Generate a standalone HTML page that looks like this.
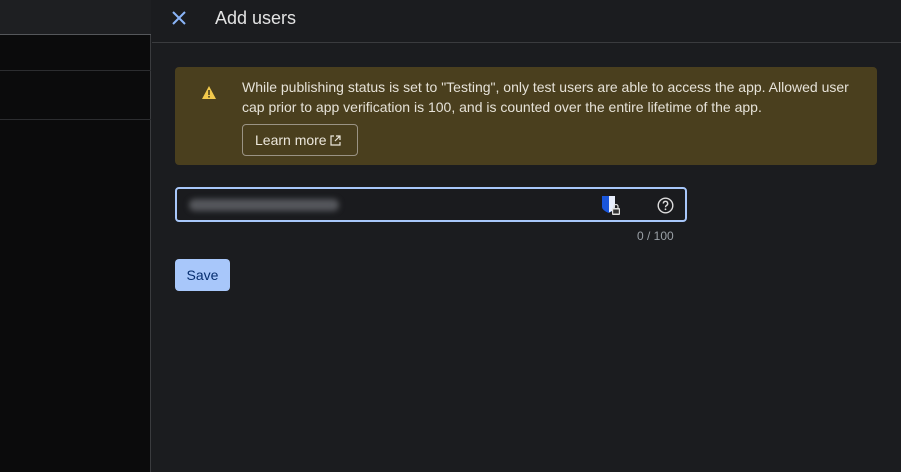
<!DOCTYPE html>
<html><head><style>
*{margin:0;padding:0;box-sizing:border-box}
body{width:901px;height:472px;overflow:hidden;background:#1b1c1f;font-family:"Liberation Sans",sans-serif;position:relative}
.left{position:absolute;left:0;top:0;width:151px;height:472px;background:#0b0b0c;border-right:1px solid #3a3b3e}
.ltop{position:absolute;left:0;top:0;width:151px;height:35px;background:#1e1f22;border-bottom:1px solid #55575b}
.ln{position:absolute;left:0;width:151px;height:1px;background:#2c2d30}
.hdr{position:absolute;left:152px;top:0;right:0;height:43px;border-bottom:1px solid #3a3b3e}
.title{position:absolute;left:215px;top:8px;color:#e3e3e3;font-size:18px}
.banner{position:absolute;left:175px;top:67px;width:702px;height:98px;background:#4a3f1e;border-radius:4px}
.btxt{position:absolute;left:67px;top:10px;color:#e6e2d8;font-size:14px;line-height:20px;width:620px}
.lm{position:absolute;left:67px;top:57px;width:116px;height:32px;border:1px solid #9a9384;border-radius:4px;color:#ece7dc;font-size:14px;line-height:30px;padding-left:12px}
.inp{position:absolute;left:175px;top:187px;width:512px;height:35px;border:2px solid #a8c7fa;border-radius:4px;background:#1a1b1e}
.blur{position:absolute;left:12px;top:10px;width:150px;height:12px;background:#55575c;filter:blur(3px);border-radius:6px}
.cnt{position:absolute;left:637px;top:229px;color:#9aa0a6;font-size:12px}
.save{position:absolute;left:175px;top:259px;width:55px;height:32px;background:#a8c7fa;border-radius:4px;color:#062e6f;font-size:14px;text-align:center;line-height:32px}
</style></head><body>
<div class="left"><div class="ltop"></div><div class="ln" style="top:70px"></div><div class="ln" style="top:119px"></div></div>
<div class="hdr"></div>
<svg style="position:absolute;left:171px;top:10px" width="16" height="16" viewBox="0 0 16 16"><path d="M2 2L14 14M14 2L2 14" stroke="#8ab4f8" stroke-width="2"/></svg>
<div class="title">Add users</div>
<div class="banner">
<svg style="position:absolute;left:27px;top:19px" width="14" height="13" viewBox="0 0 14 13"><path d="M7 0L14 13H0Z" fill="#f2c94c"/><rect x="6.2" y="4" width="1.6" height="5" fill="#4a3f1e"/><rect x="6.2" y="10" width="1.6" height="1.6" fill="#4a3f1e"/></svg>
<div class="btxt">While publishing status is set to "Testing", only test users are able to access the app. Allowed user cap prior to app verification is 100, and is counted over the entire lifetime of the app.</div>
<div class="lm">Learn more <svg width="11" height="11" viewBox="0 0 11 11" style="vertical-align:-1px"><path d="M4 1H1V10H10V7M6 1H10V5M10 1L5 6" stroke="#ece7dc" stroke-width="1.2" fill="none"/></svg></div>
</div>
<div class="inp"><div class="blur"></div>
<svg style="position:absolute;left:424px;top:6px" width="20" height="22" viewBox="0 0 20 22"><path d="M1 1H14V12Q14 15 7.5 18Q1 15 1 12Z" fill="#1a56db"/><path d="M8 1H14V12Q14 15 8 17.5Z" fill="#e8eefc"/><rect x="11" y="13" width="8" height="7" rx="1" fill="#e0e0e0"/><path d="M13 13V11.5a2 2 0 0 1 4 0V13" stroke="#e0e0e0" stroke-width="1.2" fill="none"/><rect x="12.2" y="14.5" width="5.6" height="4" fill="#333"/></svg>
<svg style="position:absolute;left:480px;top:8px" width="17" height="17" viewBox="0 0 17 17"><circle cx="8.5" cy="8.5" r="7.3" stroke="#dcdcdc" stroke-width="1.4" fill="none"/><path d="M6.3 6.5a2.2 2.2 0 1 1 3.2 2c-.8.4-1 .9-1 1.7" stroke="#dcdcdc" stroke-width="1.4" fill="none"/><circle cx="8.5" cy="12.3" r=".9" fill="#dcdcdc"/></svg>
</div>
<div class="cnt">0 / 100</div>
<div class="save">Save</div>
</body></html>
